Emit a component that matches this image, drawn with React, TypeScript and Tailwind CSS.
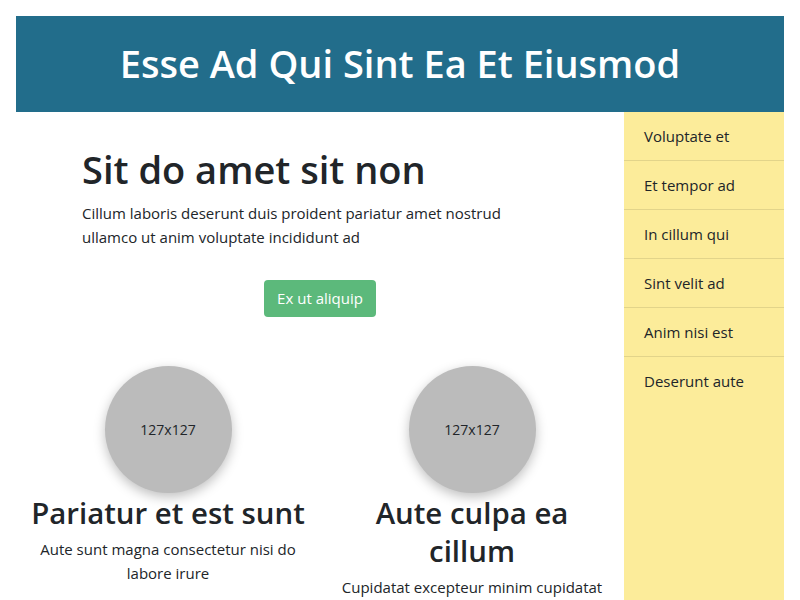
import React from "react";

const font = { fontFamily: '"Open Sans", "Noto Sans", sans-serif' };

export default function App() {
  const items = ["Voluptate et", "Et tempor ad", "In cillum qui", "Sint velit ad", "Anim nisi est", "Deserunt aute"];
  return (
    <div className="bg-white px-4 pt-4 text-[#212529]" style={font}>
      <header className="h-24 bg-[#226d8b] flex items-center justify-center">
        <h1 className="text-[38px] leading-tight font-semibold text-white">Esse Ad Qui Sint Ea Et Eiusmod</h1>
      </header>
      <div className="flex">
        <main className="w-[608px] pb-10">
          <section className="w-[476px] mx-auto pt-[35px]">
            <h2 className="text-[38px] leading-[1.2] font-semibold mb-[8px]">Sit do amet sit non</h2>
            <p className="text-[15px] leading-6">
              Cillum laboris deserunt duis proident pariatur amet nostrud ullamco ut anim voluptate incididunt ad
            </p>
            <div className="flex justify-center mt-[31px]">
              <button className="h-[37px] w-[112px] rounded bg-[#5cb97b] text-white text-[15px]">Ex ut aliquip</button>
            </div>
          </section>
          <div className="grid grid-cols-2 mt-[49px]">
            <div className="flex flex-col items-center text-center px-3">
              <div className="w-[127px] h-[127px] rounded-full bg-[#bbbbbb] shadow-[0_4px_12px_rgba(0,0,0,0.25)] flex items-center justify-center text-[14px]">127x127</div>
              <h3 className="text-[29.4px] leading-[38px] font-semibold mt-[1px]">Pariatur et est sunt</h3>
              <p className="text-[15px] leading-6 mt-[5px]">Aute sunt magna consectetur nisi do labore irure</p>
            </div>
            <div className="flex flex-col items-center text-center px-3">
              <div className="w-[127px] h-[127px] rounded-full bg-[#bbbbbb] shadow-[0_4px_12px_rgba(0,0,0,0.25)] flex items-center justify-center text-[14px]">127x127</div>
              <h3 className="text-[29.4px] leading-[38px] font-semibold mt-[1px]">Aute culpa ea cillum</h3>
              <p className="text-[15px] leading-6 mt-[5px]">Cupidatat excepteur minim cupidatat</p>
            </div>
          </div>
        </main>
        <aside className="w-[160px] bg-[#fcec9a]">
          {items.map((t, i) => (
            <div key={t} className={"px-5 py-3 leading-6 text-[15px] " + (i < items.length - 1 ? "border-b border-[#e2d48a]" : "")}>{t}</div>
          ))}
        </aside>
      </div>
    </div>
  );
}
